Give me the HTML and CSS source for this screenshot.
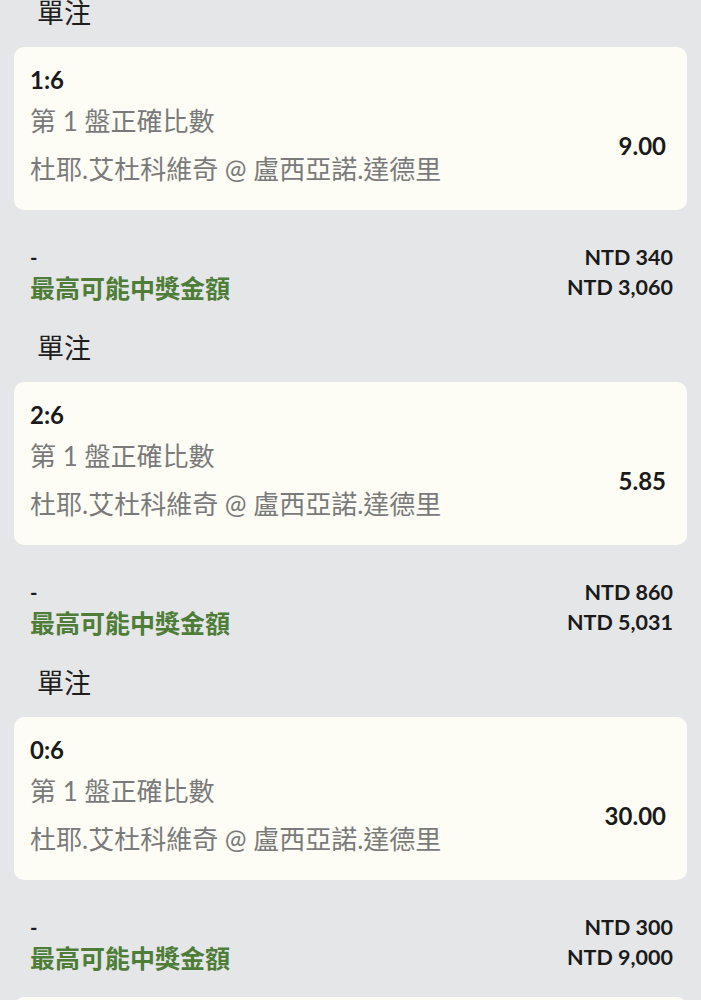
FILE: index.html
```html
<!DOCTYPE html>
<html lang="zh-Hant">
<head>
  <meta charset="UTF-8" />
  <meta name="viewport" content="width=device-width, initial-scale=1.0"/>
  <title>單注</title>
  <link rel="stylesheet" href="styles.css">
</head>
<body>
  <div class="slip">
    <div class="bet">
      <div class="bet-title">單注</div>
      <div class="card">
        <div class="score">1:6</div>
        <div class="card-row">
          <div class="info">
            <div class="line">第 1 盤正確比數</div>
            <div class="line">杜耶.艾杜科維奇 @ 盧西亞諾.達德里</div>
          </div>
          <div class="odds">9.00</div>
        </div>
      </div>
      <div class="money">
        <div class="money-row">
          <span class="stake">-</span>
          <span class="amount">NTD 340</span>
        </div>
        <div class="money-row">
          <span class="label">最高可能中獎金額</span>
          <span class="amount">NTD 3,060</span>
        </div>
      </div>
    </div>

    <div class="bet">
      <div class="bet-title">單注</div>
      <div class="card">
        <div class="score">2:6</div>
        <div class="card-row">
          <div class="info">
            <div class="line">第 1 盤正確比數</div>
            <div class="line">杜耶.艾杜科維奇 @ 盧西亞諾.達德里</div>
          </div>
          <div class="odds">5.85</div>
        </div>
      </div>
      <div class="money">
        <div class="money-row">
          <span class="stake">-</span>
          <span class="amount">NTD 860</span>
        </div>
        <div class="money-row">
          <span class="label">最高可能中獎金額</span>
          <span class="amount">NTD 5,031</span>
        </div>
      </div>
    </div>

    <div class="bet">
      <div class="bet-title">單注</div>
      <div class="card">
        <div class="score">0:6</div>
        <div class="card-row">
          <div class="info">
            <div class="line">第 1 盤正確比數</div>
            <div class="line">杜耶.艾杜科維奇 @ 盧西亞諾.達德里</div>
          </div>
          <div class="odds">30.00</div>
        </div>
      </div>
      <div class="money">
        <div class="money-row">
          <span class="stake">-</span>
          <span class="amount">NTD 300</span>
        </div>
        <div class="money-row">
          <span class="label">最高可能中獎金額</span>
          <span class="amount">NTD 9,000</span>
        </div>
      </div>
    </div>

    <div class="card summary"></div>
  </div>
</body>
</html>
```

FILE: styles.css
```css
body {
  margin: 0;
  background: #e5e6e8;
  font-family: "Lato", "Noto Sans CJK TC", sans-serif;
  color: #1a1a1a;
  overflow: hidden;
}

.slip {
  margin-top: -6px;
  padding: 0 14px;
}

.bet-title {
  font-family: "Noto Sans CJK TC", sans-serif;
  font-size: 27px;
  line-height: 36px;
  padding-left: 23px;
  margin-bottom: 17px;
  color: #1e1e1e;
}

.card {
  background: #fdfdf5;
  border-radius: 10px;
  padding: 16px 21px 17px 16px;
}

.score {
  font-size: 24px;
  font-weight: 700;
  line-height: 34px;
}

.card-row {
  display: flex;
  align-items: center;
  justify-content: space-between;
}

.line {
  font-size: 26px;
  line-height: 48px;
  color: #7a7a7a;
}

.odds {
  font-size: 24px;
  font-weight: 700;
}

.money {
  padding: 32px 14px 27px 16px;
}

.money-row {
  display: flex;
  justify-content: space-between;
  align-items: center;
  height: 30px;
}

.stake {
  font-size: 20px;
  font-weight: 700;
}

.amount {
  font-size: 21.5px;
  font-weight: 700;
}

.label {
  font-family: "Noto Sans CJK TC", sans-serif;
  font-size: 25px;
  font-weight: 700;
  color: #4e7d38;
}

.summary {
  margin-top: -2px;
  height: 120px;
}
```
